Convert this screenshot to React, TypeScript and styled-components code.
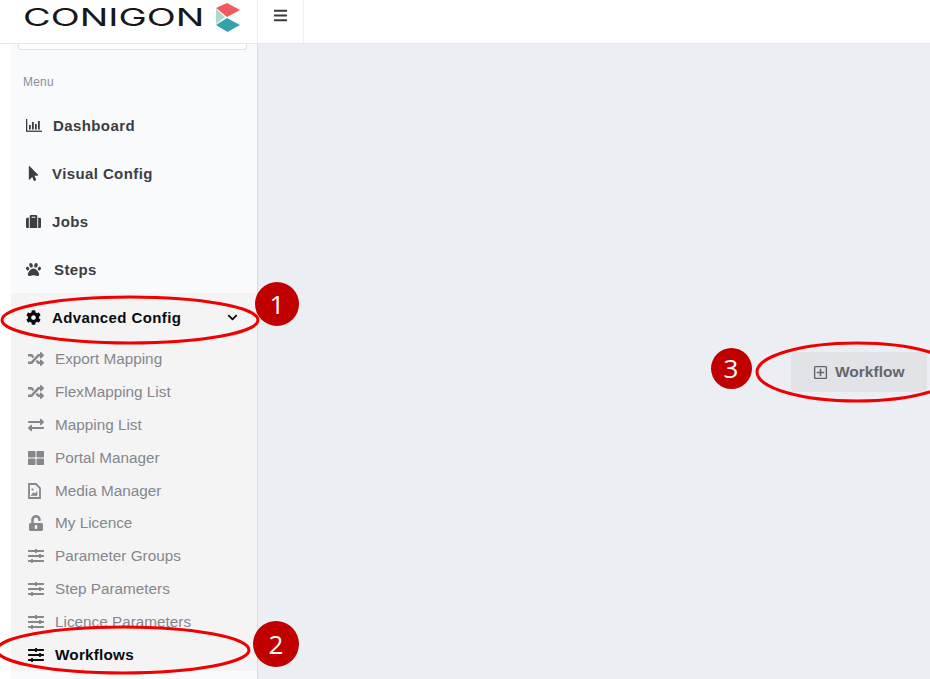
import React from "react";
import styled, { createGlobalStyle } from "styled-components";
import {
  FaMousePointer, FaSuitcase, FaPaw, FaCog, FaChevronDown, FaRandom, FaExchangeAlt,
  FaThLarge, FaUnlockAlt, FaSlidersH, FaRegPlusSquare, FaBars,
} from "react-icons/fa";

const Global = createGlobalStyle`
  html, body { margin: 0; padding: 0; background: #fff; }
  body { font-family: "Liberation Sans", Arial, sans-serif; overflow: hidden; }
`;
const Page = styled.div`
  position: relative; width: 930px; height: 679px; overflow: hidden; display: flex; flex-direction: column;
`;
const Header = styled.header`
  height: 43px; flex: none; display: flex; background: #fff; border-bottom: 1px solid #e4e7ec;
`;
const Brand = styled.div`
  width: 257px; flex: none; display: flex; align-items: flex-start; padding: 3px 0 0 23px; box-sizing: border-box; gap: 9px;
`;
const LogoText = styled.span`
  font-family: "Inter", sans-serif; font-size: 24px; line-height: 29px; color: #17171a;
  font-weight: 400; display: inline-block; width: 183px; white-space: nowrap;
  transform-origin: left center; transform: scaleX(1.58);
`;
const Toggle = styled.div`
  width: 47px; box-sizing: border-box; border-left: 1px solid #eef0f3; border-right: 1px solid #eef0f3;
  display: flex; justify-content: center; padding-top: 8px; color: #3a3a3c; font-size: 15px;
`;
const Body = styled.div`
  flex: 1; display: flex; min-height: 0;
`;
const Sidebar = styled.aside`
  margin-left: 11px; width: 246px; flex: none; background: #f9fafc; border-right: 1px solid #d5dae3; position: relative;
`;
const SearchStub = styled.div`
  margin-left: 7px; width: 229px; height: 6px; box-sizing: border-box; background: #fff;
  border: 1px solid #dfe2e8; border-top: 0; border-radius: 0 0 3px 3px;
`;
const MenuLabel = styled.div`
  margin: 25px 0 0 12px; font-size: 12px; line-height: 14px; color: #8d8f96; letter-spacing: 0.2px;
`;
const TopList = styled.nav`
  margin-top: 12px; display: flex; flex-direction: column;
`;
const TopItem = styled.div<{ $active?: boolean }>`
  height: 48px; display: flex; align-items: center; padding-left: 15px; box-sizing: border-box;
  font-size: 15px; font-weight: 700; letter-spacing: 0.4px; color: ${(p) => (p.$active ? "#0b0b0f" : "#3d3d44")};
`;
const TopIcon = styled.span<{ $w?: number }>`
  width: ${(p) => p.$w ?? 26}px; flex: none; display: flex; align-items: center; font-size: 15px;
`;
const Chevron = styled.span`
  margin-left: auto; margin-right: 19px; font-size: 11px; display: flex;
`;
const Group = styled.div`
  background: #f4f4f5;
`;
const SubList = styled.div`
  display: flex; flex-direction: column; margin-top: 2px;
`;
const SubItem = styled.div<{ $active?: boolean }>`
  height: 32.8px; display: flex; align-items: center; padding-left: 17px; box-sizing: border-box;
  font-size: 15.3px; font-weight: ${(p) => (p.$active ? 700 : 400)};
  letter-spacing: ${(p) => (p.$active ? "0.2px" : "0")};
  color: ${(p) => (p.$active ? "#0b0b0f" : "#85878d")};
`;
const SubIcon = styled.span`
  width: 27px; flex: none; display: flex; align-items: center; font-size: 16px;
`;
const Main = styled.main`
  flex: 1; background: #ebeef3; display: flex; justify-content: flex-end; align-items: flex-start; padding: 308px 3px 0 0;
`;
const AddButton = styled.div`
  width: 136px; height: 40px; box-sizing: border-box; background: #e1e3e6; border-radius: 4px;
  display: flex; align-items: center; padding-left: 22px; gap: 7px; color: #64666c; font-size: 15.5px; font-weight: 700;
`;
const Rings = styled.svg`
  position: absolute; inset: 0; width: 930px; height: 679px; pointer-events: none;
`;
const Badge = styled.div<{ $x: number; $y: number; $d: number }>`
  position: absolute; left: ${(p) => p.$x - p.$d / 2}px; top: ${(p) => p.$y - p.$d / 2}px;
  width: ${(p) => p.$d}px; height: ${(p) => p.$d}px; border-radius: 50%; background: #c00000; color: #fff;
  display: flex; align-items: center; justify-content: center; font-family: "Open Sans", sans-serif; font-size: 26px; font-weight: 500;
`;

const ChartIcon = () => (
  <svg width="16" height="13" viewBox="0 0 16 13" fill="currentColor">
    <rect x="0" y="0" width="1.3" height="12" /><rect x="0" y="11.6" width="16" height="1.3" />
    <rect x="3" y="6" width="1.8" height="4.5" /><rect x="6" y="3" width="1.8" height="7.5" />
    <rect x="9" y="5" width="1.8" height="5.5" /><rect x="12" y="2" width="1.8" height="8.5" />
  </svg>
);
const MediaIcon = () => (
  <svg width="13" height="16" viewBox="0 0 13 16" fill="none" stroke="currentColor">
    <path d="M1 1h7l4 4v10H1z" strokeWidth="1.8" />
    <path d="M3 12.5l2.5-3 1.5 1.5 2-2.5v4z" fill="currentColor" strokeWidth="0.6" />
    <circle cx="4.5" cy="6.5" r="1.1" fill="currentColor" stroke="none" />
  </svg>
);
const Logo = () => (
  <svg width="26" height="30" viewBox="215 3 26 30" style={{ flex: "none" }}>
    <polygon points="216,9 225,17 216,24" fill="#a9d8cc" />
    <polygon points="216,8 227,3 240,10 227,17" fill="#ef5a5e" />
    <polygon points="216,25 227,18 240,25 227.5,32" fill="#33a2ab" />
  </svg>
);

const sub: [React.ReactNode, string, boolean?][] = [
  [<FaRandom />, "Export Mapping"],
  [<FaRandom />, "FlexMapping List"],
  [<FaExchangeAlt />, "Mapping List"],
  [<FaThLarge />, "Portal Manager"],
  [<MediaIcon />, "Media Manager"],
  [<FaUnlockAlt />, "My Licence"],
  [<FaSlidersH />, "Parameter Groups"],
  [<FaSlidersH />, "Step Parameters"],
  [<FaSlidersH />, "Licence Parameters"],
  [<FaSlidersH />, "Workflows", true],
];

export default function App() {
  return (
    <Page>
      <Global />
      <Header>
        <Brand>
          <LogoText>CONIGON</LogoText>
          <Logo />
        </Brand>
        <Toggle><FaBars /></Toggle>
      </Header>
      <Body>
        <Sidebar>
          <SearchStub />
          <MenuLabel>Menu</MenuLabel>
          <TopList>
            <TopItem><TopIcon $w={27}><ChartIcon /></TopIcon>Dashboard</TopItem>
            <TopItem><TopIcon><FaMousePointer /></TopIcon>Visual Config</TopItem>
            <TopItem><TopIcon><FaSuitcase /></TopIcon>Jobs</TopItem>
            <TopItem><TopIcon $w={28}><FaPaw /></TopIcon>Steps</TopItem>
            <Group>
              <TopItem $active>
                <TopIcon><FaCog /></TopIcon>Advanced Config
                <Chevron><FaChevronDown /></Chevron>
              </TopItem>
              <SubList>
                {sub.map(([icon, label, active]) => (
                  <SubItem key={label} $active={active}><SubIcon>{icon}</SubIcon>{label}</SubItem>
                ))}
              </SubList>
            </Group>
          </TopList>
        </Sidebar>
        <Main>
          <AddButton><FaRegPlusSquare size={15} />Workflow</AddButton>
        </Main>
      </Body>
      <Rings viewBox="0 0 930 679" fill="none" stroke="#f00000" strokeWidth="3">
        <ellipse cx="130" cy="320" rx="128" ry="23" />
        <ellipse cx="123" cy="650" rx="126" ry="23" />
        <ellipse cx="857" cy="372" rx="100" ry="29" />
      </Rings>
      <Badge $x={277} $y={304} $d={44}>1</Badge>
      <Badge $x={276} $y={644} $d={46}>2</Badge>
      <Badge $x={731} $y={368} $d={41}>3</Badge>
    </Page>
  );
}
